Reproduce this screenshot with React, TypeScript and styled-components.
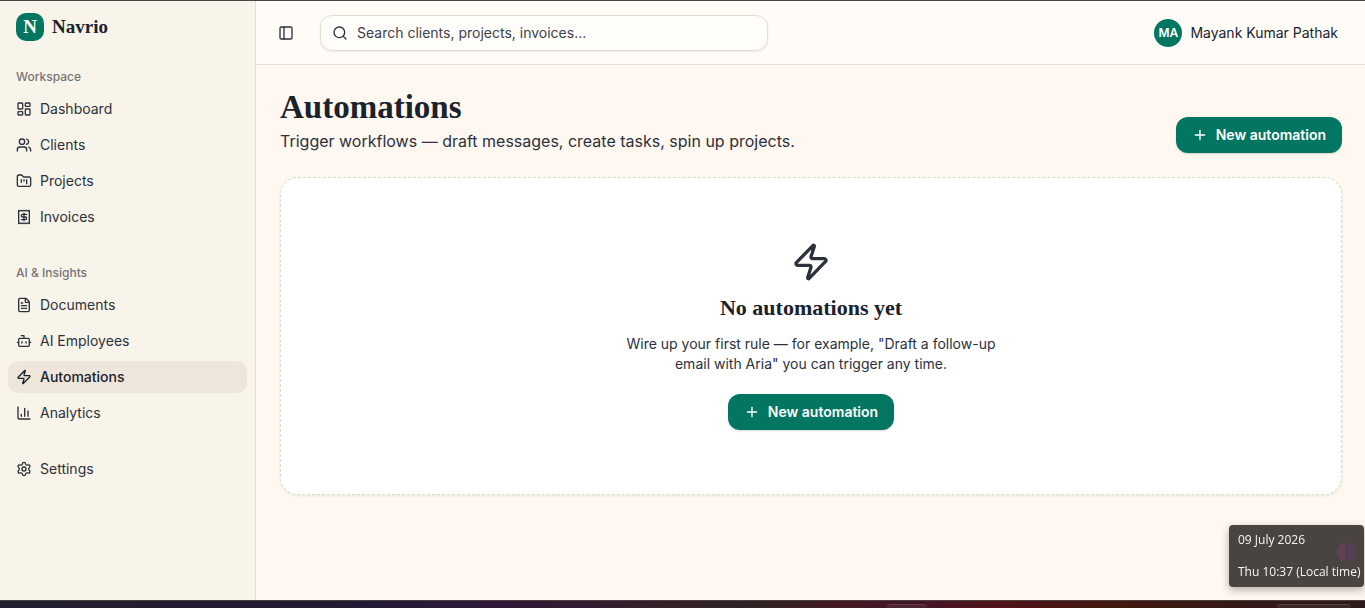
import React from 'react';
import styled, { createGlobalStyle, css } from 'styled-components';
import {
  Bot,
  ChartColumn,
  FileText,
  FolderKanban,
  LayoutDashboard,
  PanelLeft,
  Plus,
  Receipt,
  Search,
  Settings,
  Users,
  Zap,
  type LucideIcon,
} from 'lucide-react';

const color = {
  green: '#037662',
  ink: '#1a222d',
  text: '#2c313c',
  muted: '#737476',
  line: '#e3ddd4',
  sidebar: '#f8f4e9',
  active: '#eee6da',
  page: '#fff8f0',
  bar: '#fffcf8',
};

const serif = '"Liberation Serif", "Times New Roman", serif';

const GlobalStyle = createGlobalStyle`
  *, *::before, *::after { box-sizing: border-box; }
  body {
    margin: 0;
    background: ${color.page};
    color: ${color.text};
    font-family: Inter, "Liberation Sans", sans-serif;
    font-size: 14px;
    line-height: 20px;
  }
  h1, h2, p, ul { margin: 0; padding: 0; }
  button, input { font: inherit; color: inherit; }
  a { color: inherit; text-decoration: none; }
  svg { flex-shrink: 0; }
`;

const Screen = styled.div`
  display: flex;
  flex-direction: column;
  min-height: 100vh;
  border-top: 1px solid #4d4444;
`;

const Shell = styled.div`
  flex: 1;
  display: flex;
`;

const Sidebar = styled.aside`
  flex: 0 0 256px;
  display: flex;
  flex-direction: column;
  gap: 8px;
  background: ${color.sidebar};
  border-right: 1px solid ${color.line};
`;

const Brand = styled.a`
  display: flex;
  align-items: center;
  gap: 8px;
  height: 52px;
  margin-bottom: -8px;
  padding: 0 16px;
  color: ${color.ink};
  font: 700 19px/28px ${serif};
`;

const BrandMark = styled.span`
  display: grid;
  place-items: center;
  width: 28px;
  height: 28px;
  border-radius: 10px;
  background: ${color.green};
  color: #fff;
`;

const NavGroup = styled.nav`
  padding: 8px;
`;

const GroupLabel = styled.div`
  padding: 0 8px;
  color: ${color.muted};
  font-size: 12px;
  font-weight: 500;
  line-height: 32px;
`;

const NavList = styled.ul`
  display: flex;
  flex-direction: column;
  gap: 4px;
  list-style: none;
`;

const NavLink = styled.a<{ $active?: boolean }>`
  display: flex;
  align-items: center;
  gap: 8px;
  height: 32px;
  padding: 0 8px;
  border-radius: 10px;
  ${(p) =>
    p.$active &&
    css`
      background: ${color.active};
      color: ${color.ink};
      font-weight: 500;
    `}
`;

const Content = styled.div`
  flex: 1;
  min-width: 0;
  display: flex;
  flex-direction: column;
`;

const TopBar = styled.header`
  display: flex;
  align-items: center;
  height: 64px;
  padding: 0 23px 0 16px;
  background: ${color.bar};
  border-bottom: 1px solid ${color.line};
`;

const IconButton = styled.button`
  display: grid;
  place-items: center;
  width: 28px;
  height: 28px;
  padding: 0;
  border: 0;
  background: none;
`;

const SearchField = styled.label`
  flex: 0 1 448px;
  display: flex;
  align-items: center;
  gap: 9px;
  height: 36px;
  margin-left: 20px;
  padding: 0 11px;
  border: 1px solid ${color.line};
  border-radius: 12px;
  background: #fffdfa;
  box-shadow: 0 1px 2px rgba(0, 0, 0, 0.08);
`;

const SearchInput = styled.input`
  flex: 1;
  min-width: 0;
  padding: 0;
  border: 0;
  outline: 0;
  background: none;
  &::placeholder {
    color: #3d414a;
    opacity: 1;
  }
`;

const Account = styled.button`
  display: flex;
  align-items: center;
  gap: 8px;
  margin-left: auto;
  padding: 4px;
  border: 0;
  background: none;
  color: ${color.ink};
`;

const Avatar = styled.span`
  display: grid;
  place-items: center;
  width: 28px;
  height: 28px;
  border-radius: 50%;
  background: ${color.green};
  color: #fff;
  font-size: 12px;
  font-weight: 600;
`;

const Main = styled.main`
  display: flex;
  flex-direction: column;
  gap: 24px;
  padding: 24px 23px 24px 24px;
`;

const PageHead = styled.div`
  display: flex;
  align-items: flex-end;
  justify-content: space-between;
`;

const Title = styled.h1`
  margin-bottom: 4px;
  color: ${color.ink};
  font: 700 33px/36px ${serif};
`;

const Subtitle = styled.p`
  font-size: 16px;
  line-height: 24px;
`;

const PrimaryButton = styled.button`
  display: inline-flex;
  align-items: center;
  gap: 8px;
  height: 36px;
  padding: 0 16px;
  border: 0;
  border-radius: 12px;
  background: ${color.green};
  color: #fff;
  font-weight: 600;
  box-shadow: 0 1px 2px rgba(0, 0, 0, 0.15);
`;

const EmptyCard = styled.section`
  display: flex;
  flex-direction: column;
  align-items: center;
  padding: 64px 24px;
  border: 1px dashed #dcdccb;
  border-radius: 18px;
  background: #fff;
  box-shadow: 0 1px 3px rgba(0, 0, 0, 0.08);
  text-align: center;
`;

const EmptyTitle = styled.h2`
  margin: 12px 0;
  color: ${color.ink};
  font: 700 22px/28px ${serif};
`;

const EmptyText = styled.p`
  max-width: 384px;
  margin-bottom: 20px;
`;

const ClockTip = styled.div`
  position: fixed;
  right: 1px;
  bottom: 21px;
  display: flex;
  flex-direction: column;
  gap: 12px;
  width: 135px;
  padding: 5px 9px;
  border-radius: 4px;
  background: #4a4440;
  box-shadow: 0 3px 8px rgba(0, 0, 0, 0.3);
  color: #f6f4f2;
  font: 12px/20px "Open Sans", "Noto Sans", sans-serif;
  white-space: nowrap;
`;

const TipGlyph = styled.svg`
  position: absolute;
  top: 17px;
  right: 8px;
`;

const Taskbar = styled.footer`
  height: 8px;
  display: flex;
  justify-content: flex-end;
  align-items: flex-end;
  padding-right: 14px;
  border-top: 1px solid #4a4140;
  background: linear-gradient(
    90deg,
    #221f2d 0%,
    #211b33 25%,
    #2f1735 38%,
    #32202a 47%,
    #2f2222 56%,
    #421921 61%,
    #421625 67%,
    #501218 73%,
    #40180f 82%,
    #341815 91%,
    #2c1b1a 100%
  );
`;

const TaskItem = styled.span<{ $width: number; $gap: number }>`
  width: ${(p) => p.$width}px;
  height: 4px;
  margin-right: ${(p) => p.$gap}px;
  border-top: 1px solid rgba(255, 255, 255, 0.12);
  border-radius: 4px 4px 0 0;
  background: rgba(255, 255, 255, 0.06);
`;

type Item = { label: string; icon: LucideIcon; active?: boolean };

const groups: { label?: string; items: Item[] }[] = [
  {
    label: 'Workspace',
    items: [
      { label: 'Dashboard', icon: LayoutDashboard },
      { label: 'Clients', icon: Users },
      { label: 'Projects', icon: FolderKanban },
      { label: 'Invoices', icon: Receipt },
    ],
  },
  {
    label: 'AI & Insights',
    items: [
      { label: 'Documents', icon: FileText },
      { label: 'AI Employees', icon: Bot },
      { label: 'Automations', icon: Zap, active: true },
      { label: 'Analytics', icon: ChartColumn },
    ],
  },
  { items: [{ label: 'Settings', icon: Settings }] },
];

function NewAutomationButton() {
  return (
    <PrimaryButton type="button">
      <Plus size={16} />
      New automation
    </PrimaryButton>
  );
}

export default function App() {
  return (
    <>
      <GlobalStyle />
      <Screen>
        <Shell>
          <Sidebar>
            <Brand href="#">
              <BrandMark>N</BrandMark>
              Navrio
            </Brand>
            {groups.map((group, i) => (
              <NavGroup key={i} aria-label={group.label}>
                {group.label && <GroupLabel>{group.label}</GroupLabel>}
                <NavList>
                  {group.items.map(({ label, icon: Icon, active }) => (
                    <li key={label}>
                      <NavLink href="#" $active={active} aria-current={active ? 'page' : undefined}>
                        <Icon size={16} />
                        {label}
                      </NavLink>
                    </li>
                  ))}
                </NavList>
              </NavGroup>
            ))}
          </Sidebar>
          <Content>
            <TopBar>
              <IconButton type="button" aria-label="Toggle sidebar">
                <PanelLeft size={16} />
              </IconButton>
              <SearchField>
                <Search size={16} />
                <SearchInput type="text" aria-label="Search" placeholder="Search clients, projects, invoices..." />
              </SearchField>
              <Account type="button">
                <Avatar>MA</Avatar>
                Mayank Kumar Pathak
              </Account>
            </TopBar>
            <Main>
              <PageHead>
                <div>
                  <Title>Automations</Title>
                  <Subtitle>Trigger workflows — draft messages, create tasks, spin up projects.</Subtitle>
                </div>
                <NewAutomationButton />
              </PageHead>
              <EmptyCard>
                <Zap size={40} />
                <EmptyTitle>No automations yet</EmptyTitle>
                <EmptyText>
                  Wire up your first rule — for example, "Draft a follow-up email with Aria" you can trigger any time.
                </EmptyText>
                <NewAutomationButton />
              </EmptyCard>
            </Main>
          </Content>
        </Shell>
        <Taskbar>
          <TaskItem $width={40} $gap={350} />
          <TaskItem $width={74} $gap={0} />
        </Taskbar>
      </Screen>
      <ClockTip role="tooltip">
        <TipGlyph width="20" height="20" viewBox="0 0 20 20" aria-hidden="true">
          <path d="M9 1H5L0 10l5 9h4z" fill="#643f55" />
          <path d="M11 1h4l5 9-5 9h-4z" fill="#583e5a" />
        </TipGlyph>
        <span>09 July 2026</span>
        <span>Thu 10:37 (Local time)</span>
      </ClockTip>
    </>
  );
}
